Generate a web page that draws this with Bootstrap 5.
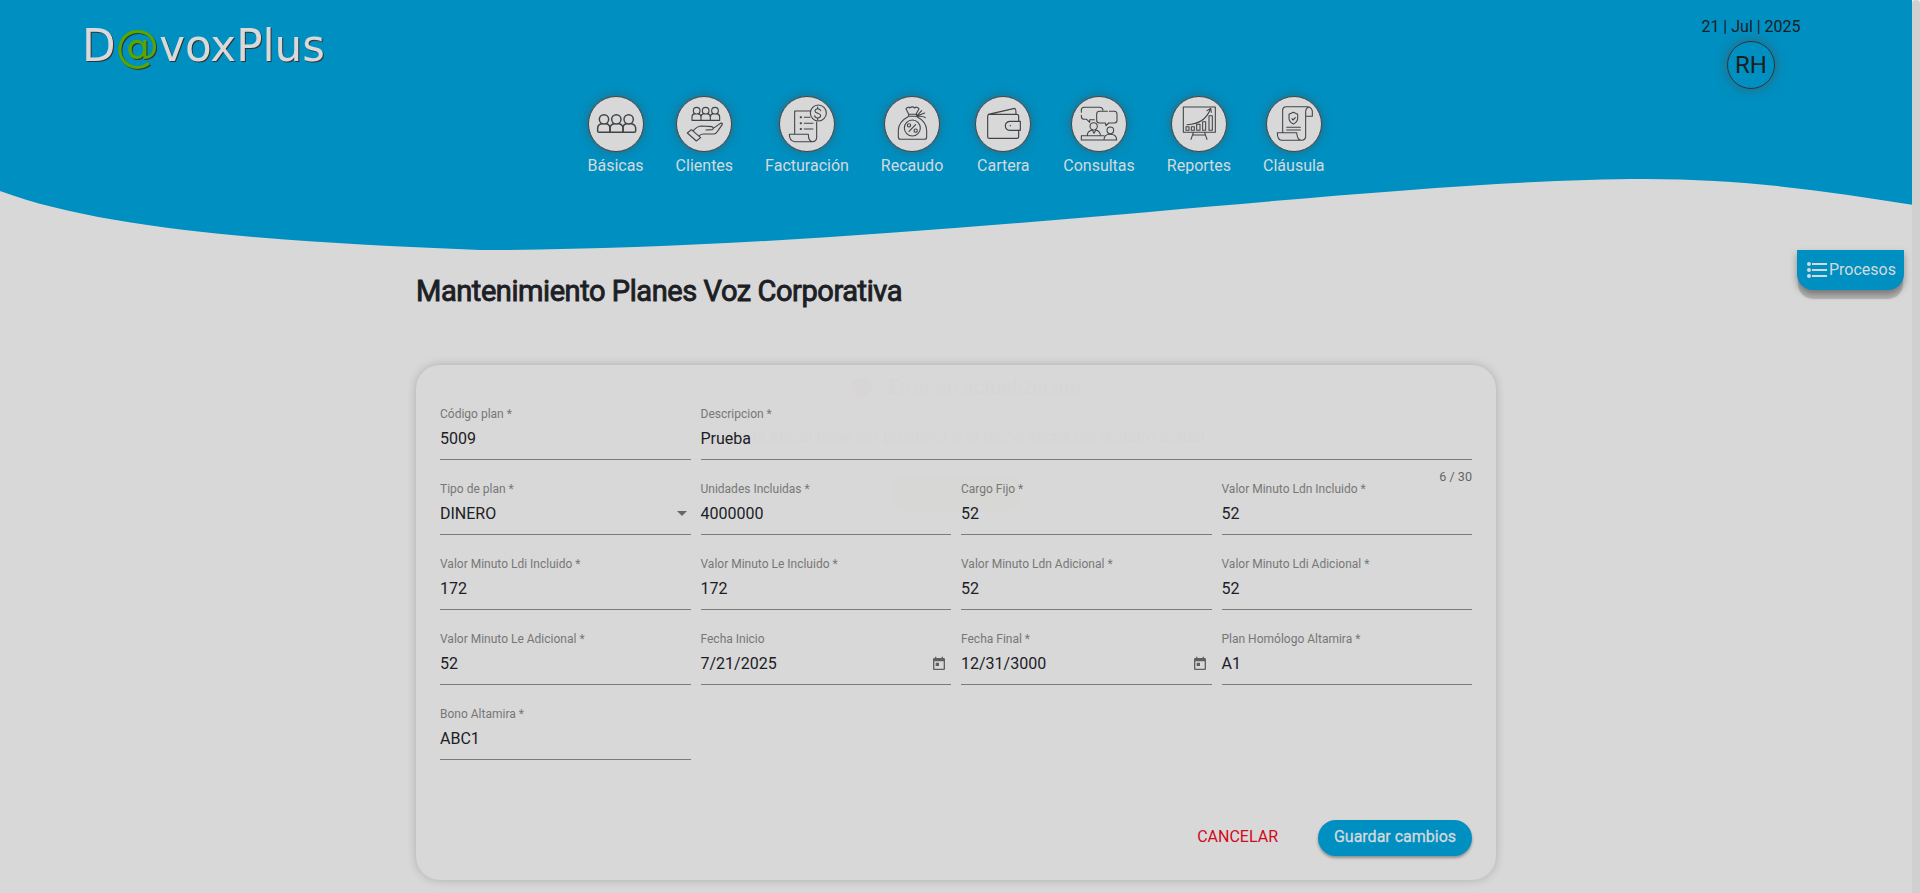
<!DOCTYPE html>
<html lang="es">
<head>
<meta charset="utf-8">
<meta name="viewport" content="width=device-width, initial-scale=1">
<title>D@voxPlus</title>
<link href="https://cdn.jsdelivr.net/npm/bootstrap@5.3.0/dist/css/bootstrap.min.css" rel="stylesheet">
<style>
:root{--azul:#008fc1;--gris:#d8d8d8;--tinta:#1c2025}
html,body{height:100%;overflow:hidden}
body{font-family:Roboto,"Liberation Sans",sans-serif;font-size:16px;background:var(--gris);color:var(--tinta)}
.page{width:1912px}
.scroll-rail{width:8px;background:#eee}
.scroll-rail div{height:100%;background:#d0d0d0;border-radius:4px 4px 0 0}
.hero{height:250px;z-index:0}
.wave{position:absolute;inset:0;z-index:-1}
.logo{margin-left:82px;margin-top:17px;filter:drop-shadow(1.5px 1.8px 0 #333)}
.user-box{width:120px;margin-right:101px;padding-top:15px}
.avatar{width:48px;height:48px;border:1px solid #333;font-size:24px;box-shadow:0 0 12px rgba(70,80,80,.65);margin-top:2px}
.topline{height:96px}
.menu{gap:32px}
.menu a{color:#d5d9db;line-height:24px;min-width:56px}
.disc{width:56px;height:56px;border:1px solid #444;background:var(--gris);box-shadow:0 0 10px rgba(70,80,80,.6);margin-bottom:2px}
.disc svg{display:block;width:56px;height:56px;margin:-1px;fill:none;stroke:#404347;stroke-width:4.4;stroke-linejoin:round;stroke-linecap:round}
.thin svg{stroke-width:3.2}
.procesos{position:absolute;right:8px;top:250px;width:107px;height:40px;background:var(--azul)!important;color:#d5d9db!important;border-radius:0 0 16px 16px;box-shadow:0 10px 1px -1px rgba(0,0,0,.17),0 4px 7px rgba(0,0,0,.35);z-index:2}
.procesos svg{margin:0 2px 0 10px}
.main-col{width:1080px;margin-left:416px}
.titulo{font-size:29px;line-height:36px;font-weight:400;-webkit-text-stroke:.9px var(--tinta);letter-spacing:-.43px;margin:23px 0 56px;white-space:nowrap}
.panel{height:515px;border-radius:24px;background:var(--gris);box-shadow:0 0 10px rgba(0,0,0,.2);padding:35px 24px 24px}
.campos{display:grid;grid-template-columns:repeat(4,1fr);column-gap:10px}
.campo{height:75px;position:relative;z-index:1}
.campo label{display:block;font-size:12px;line-height:16px;padding-top:6px;height:23px;color:#777}
.campo .valor{height:37px;padding-top:4px;line-height:24px;border-bottom:1px solid #7c7c7c}
.ancho{grid-column:span 3}
.contador{position:absolute;right:0;top:69px;font-size:12.6px;line-height:16px;color:#666}
.flecha{border:5px solid transparent;border-top-color:#666;border-bottom:0;margin:9px 4px 0 0}
.cal{width:16px;height:16px;margin:4px 4px 0 0}
.acciones{margin-top:45px;height:36px}
.cancelar{color:#d0091b;margin-right:40px;line-height:34px}
.guardar{width:154px;height:36px;border-radius:18px;background:var(--azul);color:#d5d9db;border:0;line-height:32px;-webkit-text-stroke:.3px;box-shadow:0 2px 3px rgba(0,0,0,.35);padding:0 0 2px}
.aviso{position:absolute;left:667px;top:373px;width:574px;z-index:0;pointer-events:none;color:#d6d6d6}
.aviso .cabeza{padding-left:25px}
.aviso .ico{width:20px;height:20px;background:#d8d5d6;color:var(--gris);font-size:14px;line-height:20px}
.aviso .tit{font-size:20px;line-height:28px}
.aviso .msg{line-height:24px;margin-top:24px;font-size:16.4px;white-space:nowrap}
.aviso .ok{width:130px;height:38px;background:#d7d7d5;margin-top:25px;margin-left:224px}
</style>
</head>
<body>
<div class="d-flex h-100">
<div class="page position-relative">
  <header class="hero position-relative">
    <svg class="wave" width="1912" height="250" viewBox="0 0 1912 250"><path fill="#008fc1" d="M0 0H1912V204.700C1830 191.500 1745 179 1645 179C1375 179 900 250 480 250C300 243 110 232 0 191Z"/></svg>
    <div class="topline d-flex justify-content-between">
      <svg class="logo" width="260" height="66" font-family="DejaVu Sans, sans-serif" font-size="45">
        <text x="0" y="43.500" textLength="243" lengthAdjust="spacingAndGlyphs" fill="#d9d9d9">D<tspan fill="#56a700">@</tspan>voxPlus</text>
      </svg>
      <div class="user-box d-flex flex-column align-items-center">
        <span>21 | Jul | 2025</span>
        <div class="avatar rounded-circle d-flex align-items-center justify-content-center">RH</div>
      </div>
    </div>
    <nav class="menu d-flex justify-content-center">
      <a class="text-decoration-none d-flex flex-column align-items-center"><span class="disc rounded-circle"><svg viewBox="53 33 168 168"><circle cx="101" cy="103" r="14"/><path d="M94 116q-12 2-12 14v9q0 3 4 3h33V129q-1-11-11-13"/><circle cx="138" cy="103" r="14"/><path d="M131 116q-11 2-12 14v12h39V129q-1-11-12-13"/><circle cx="175" cy="103" r="14"/><path d="M168 116q-10 2-10 13v13h34q4 0 4-4v-9q-1-11-13-13"/></svg></span>Básicas</a>
      <a class="text-decoration-none d-flex flex-column align-items-center"><span class="disc rounded-circle"><svg viewBox="318 33 168 168"><g stroke-width="3.400"><circle cx="380" cy="77" r="10"/><circle cx="407" cy="77" r="10"/><circle cx="435" cy="77" r="10"/><path d="M374 86q-8 2-8 10v10h83V96q0-8-9-10M385 86q8 2 8 11v9M402 86q-9 1-9 11M413 86q8 2 8 11v9M429 86q-8 2-8 11"/><path d="M352 144l12-10 28 24-13 10ZM370 137q12-14 25-14l31 2q7 4 1 9l-19 1M389 151q4-4 12-4h30q8-1 13-10l13-19q1-5-6-3l-22 16"/></g></svg></span>Clientes</a>
      <a class="text-decoration-none d-flex flex-column align-items-center"><span class="disc thin rounded-circle"><svg viewBox="87 33 168 168"><circle cx="205" cy="84" r="24"/><path d="M134 148V78h47M200 111v47q-1 12-13 12h-53q-16-2-16-22h57q0 21 12 22M163 97h17M163 115h26M163 132h26"/><path d="M152 97h1M152 115h1M152 132h1" stroke-width="6"/><path d="M212 77q-2-6-9-6-8 1-8 7c0 9 17 5 17 14q-1 7-9 7t-9-7M203 66v5M203 99v6"/></svg></span>Facturación</a>
      <a class="text-decoration-none d-flex flex-column align-items-center"><span class="disc thin rounded-circle"><svg viewBox="402 33 168 168"><path d="M476 88l-8-17q7-8 11-2 8-7 15 0 6-6 13 2l-9 17M476 88h24M476 94h24M476 88v6M500 88v6M474 95q-29 16-29 40v21q0 7 7 7h71q7 0 7-7v-20q0-26-29-41M502 91l13-14M502 92l22-8M502 94q18-2 24 4"/><circle cx="487" cy="129" r="24"/><circle cx="477" cy="121" r="5"/><circle cx="497" cy="137" r="5"/><path d="M497 119l-20 20"/></svg></span>Recaudo</a>
      <a class="text-decoration-none d-flex flex-column align-items-center"><span class="disc rounded-circle"><svg viewBox="75 33 168 168"><g stroke-width="3.500"><path d="M206 108V94q0-6-6-6h-82q-5 0-5 6v61q0 5 5 5h83q5 0 5-5v-19M115 88l79-18q4 0 4 18"/><path d="M211 109h-32q-13 2-13 14 1 12 13 13h32ZM181 121v1"/></g></svg></span>Cartera</a>
      <a class="text-decoration-none d-flex flex-column align-items-center"><span class="disc thin rounded-circle"><svg viewBox="363 33 168 168"><path d="M394 82v-6q0-9 8-9h47q8 0 10 8M394 91v3q0 9 8 9h8l9 9v-8h14M478 79h15q8 0 8 9v18q0 8-8 8h-17l-8 8-2-8h-18q-8 0-8-8V88q0-9 8-9h24"/><circle cx="431" cy="124" r="11"/><circle cx="481" cy="136" r="10"/><path d="M412 151q0-13 15-16l5 10 6-10q12 4 13 14M462 165q0-17 18-17 20 0 20 17ZM462 152h-68v13h68"/></svg></span>Consultas</a>
      <a class="text-decoration-none d-flex flex-column align-items-center"><span class="disc thin rounded-circle"><svg viewBox="93 33 168 168"><path d="M130 66h96v76h-96ZM160 143l-7 20M194 143l7 20M159 150h36M138 125h9v11h-9ZM154 125h9v11h-9ZM170 118h10v18h-10ZM188 110h9v26h-9ZM207 92h10v44h-10ZM141 119q54-2 70-47M201 77l11-7 2 12"/></svg></span>Reportes</a>
      <a class="text-decoration-none d-flex flex-column align-items-center"><span class="disc thin rounded-circle"><svg viewBox="378 33 168 168"><path d="M428 142V74q1-8 9-9h66q12 2 14 13v16h-20M508 66q-11 3-11 14v75q-1 10-12 11h-60q-13-2-13-23h58q2 23 14 23M440 127h41M440 135h41M460 82l13 6v13q-2 12-13 16-11-4-13-16V88ZM456 101l3 4 7-7"/></svg></span>Cláusula</a>
    </nav>
  </header>
  <button class="procesos btn border-0 p-0 d-flex align-items-center">
    <svg width="20" height="16" fill="#d5d9db" viewBox="0 0 20 16"><circle cx="2" cy="2" r="2"/><circle cx="2" cy="8" r="2"/><circle cx="2" cy="14" r="2"/><path d="M5 1h15v2H5zM5 7h15v2H5zM5 13h15v2H5z"/></svg>Procesos
  </button>
  <main class="main-col">
    <h1 class="titulo">Mantenimiento Planes Voz Corporativa</h1>
    <section class="panel">
      <div class="campos">
        <div class="campo"><label>Código plan *</label><div class="valor">5009</div></div>
        <div class="campo ancho"><label>Descripcion *</label><div class="valor">Prueba</div><span class="contador">6 / 30</span></div>
        <div class="campo"><label>Tipo de plan *</label><div class="valor d-flex justify-content-between">DINERO<i class="flecha"></i></div></div>
        <div class="campo"><label>Unidades Incluidas *</label><div class="valor">4000000</div></div>
        <div class="campo"><label>Cargo Fijo *</label><div class="valor">52</div></div>
        <div class="campo"><label>Valor Minuto Ldn Incluido *</label><div class="valor">52</div></div>
        <div class="campo"><label>Valor Minuto Ldi Incluido *</label><div class="valor">172</div></div>
        <div class="campo"><label>Valor Minuto Le Incluido *</label><div class="valor">172</div></div>
        <div class="campo"><label>Valor Minuto Ldn Adicional *</label><div class="valor">52</div></div>
        <div class="campo"><label>Valor Minuto Ldi Adicional *</label><div class="valor">52</div></div>
        <div class="campo"><label>Valor Minuto Le Adicional *</label><div class="valor">52</div></div>
        <div class="campo"><label>Fecha Inicio</label><div class="valor d-flex justify-content-between">7/21/2025<svg class="cal" viewBox="0 0 24 24" fill="#606060"><path d="M19 3h-1V1h-2v2H8V1H6v2H5c-1.100 0-2 .9-2 2v14c0 1.100.9 2 2 2h14c1.100 0 2-.9 2-2V5c0-1.100-.9-2-2-2zm0 16H5V8h14v11zM7 10h5v5H7z"/></svg></div></div>
        <div class="campo"><label>Fecha Final *</label><div class="valor d-flex justify-content-between">12/31/3000<svg class="cal" viewBox="0 0 24 24" fill="#606060"><path d="M19 3h-1V1h-2v2H8V1H6v2H5c-1.100 0-2 .9-2 2v14c0 1.100.9 2 2 2h14c1.100 0 2-.9 2-2V5c0-1.100-.9-2-2-2zm0 16H5V8h14v11zM7 10h5v5H7z"/></svg></div></div>
        <div class="campo"><label>Plan Homólogo Altamira *</label><div class="valor">A1</div></div>
        <div class="campo"><label>Bono Altamira *</label><div class="valor">ABC1</div></div>
      </div>
      <div class="acciones d-flex justify-content-end">
        <span class="cancelar">CANCELAR</span>
        <button class="guardar">Guardar cambios</button>
      </div>
    </section>
  </main>
  <!-- Error notice fading out above the form -->
  <div class="aviso text-center">
    <div class="cabeza d-flex justify-content-center align-items-center gap-3"><span class="ico rounded-circle">!</span><span class="tit">Error en actualizacion</span></div>
    <div class="msg">La fecha inicial debe ser posterior a la fecha inicial del registro actual</div>
    <div class="ok rounded-pill"></div>
  </div>
</div>
<div class="scroll-rail"><div></div></div>
</div>
<script src="https://cdn.jsdelivr.net/npm/bootstrap@5.3.0/dist/js/bootstrap.bundle.min.js"></script>
</body>
</html>
